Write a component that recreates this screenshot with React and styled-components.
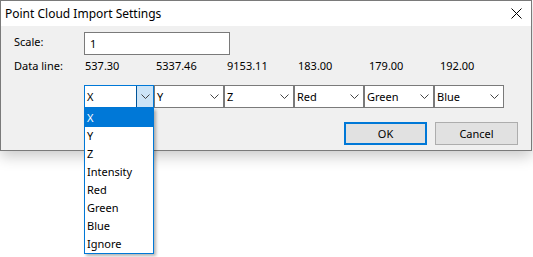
import React from 'react';
import styled, { createGlobalStyle } from 'styled-components';

const GlobalStyle = createGlobalStyle`
	body {
		margin: 0;
		background: #ffffff;
		font-family: 'Noto Sans', 'Open Sans', sans-serif;
		font-size: 11px;
		color: #000;
	}
`;

const Page = styled.div`
	width: 533px;
	height: 257px;
	position: relative;
	overflow: hidden;
`;

const Window = styled.div`
	width: 532px;
	box-sizing: border-box;
	border: 1px solid #7a7a7a;
	box-shadow: 0 5px 14px rgba(0, 0, 0, 0.22);
	display: flex;
	flex-direction: column;
`;

const TitleBar = styled.div`
	height: 25px;
	background: #ffffff;
	display: flex;
	align-items: center;
	justify-content: space-between;
	padding: 0 9px 0 4px;
	font-size: 12px;
`;

const Body = styled.div`
	height: 124px;
	box-sizing: border-box;
	background: #f0f0f0;
	padding: 6px 13px 0 13px;
	display: flex;
	flex-direction: column;
`;

const Row = styled.div`
	display: flex;
	align-items: ${(p) => p.align || 'flex-start'};
	margin-top: ${(p) => p.gap || 0}px;
`;

const Label = styled.div`
	width: 70px;
	flex-shrink: 0;
	padding-top: ${(p) => p.pad || 0}px;
	line-height: 16px;
`;

const TextInput = styled.div`
	width: 146px;
	height: 23px;
	box-sizing: border-box;
	background: #fff;
	border: 1px solid #7a7a7a;
	padding-left: 5px;
	display: flex;
	align-items: center;
`;

const Value = styled.div`
	width: 70px;
	padding-left: 1px;
	line-height: 16px;
`;

const Combo = styled.div`
	width: 70px;
	height: 23px;
	box-sizing: border-box;
	margin-right: ${(p) => (p.last ? 0 : 0)}px;
	background: #fff;
	border: 1px solid ${(p) => (p.active ? '#0078d7' : '#7a7a7a')};
	display: flex;
	align-items: center;
	position: relative;
`;

const ComboText = styled.span`
	flex: 1;
	padding-left: 2px;
`;

const Arrow = styled.div`
	width: 16px;
	align-self: stretch;
	display: flex;
	align-items: center;
	justify-content: center;
	background: ${(p) => (p.active ? '#cce4f7' : 'transparent')};
	border-left: 1px solid ${(p) => (p.active ? '#005499' : 'transparent')};
	margin-right: ${(p) => (p.active ? 0 : 1)}px;
`;

const DropList = styled.div`
	position: absolute;
	left: -1px;
	top: 22px;
	width: 70px;
	box-sizing: border-box;
	background: #fff;
	border: 1px solid #0078d7;
	box-shadow: 2px 2px 3px rgba(0, 0, 0, 0.3);
	z-index: 5;
`;

const Item = styled.div`
	height: 18px;
	line-height: 18px;
	padding-left: 2px;
	background: ${(p) => (p.selected ? '#0078d7' : 'transparent')};
	color: ${(p) => (p.selected ? '#fff' : '#000')};
`;

const Buttons = styled.div`
	display: flex;
	justify-content: flex-end;
	gap: 8px;
	margin-top: 14px;
`;

const Button = styled.div`
	width: 83px;
	height: 23px;
	box-sizing: border-box;
	background: #e1e1e1;
	border: ${(p) => (p.primary ? '2px solid #0078d7' : '1px solid #adadad')};
	display: flex;
	align-items: center;
	justify-content: center;
`;

const Chevron = () => (
	<svg width="9" height="5" viewBox="0 0 9 5">
		<path d="M0.5 0.5 L4.5 4.5 L8.5 0.5" fill="none" stroke="#444" strokeWidth="1" />
	</svg>
);

const CloseIcon = () => (
	<svg width="11" height="11" viewBox="0 0 11 11">
		<path d="M0.5 0.5 L10.5 10.5 M10.5 0.5 L0.5 10.5" stroke="#000" strokeWidth="1" />
	</svg>
);

const values = ['537.30', '5337.46', '9153.11', '183.00', '179.00', '192.00'];
const columns = ['X', 'Y', 'Z', 'Red', 'Green', 'Blue'];
const options = ['X', 'Y', 'Z', 'Intensity', 'Red', 'Green', 'Blue', 'Ignore'];

export default function App() {
	return (
		<Page>
			<GlobalStyle />
			<Window>
				<TitleBar>
					<span>Point Cloud Import Settings</span>
					<CloseIcon />
				</TitleBar>
				<Body>
					<Row>
						<Label pad={2}>Scale:</Label>
						<TextInput>1</TextInput>
					</Row>
					<Row gap={3}>
						<Label>Data line:</Label>
						{values.map((v) => (
							<Value key={v}>{v}</Value>
						))}
					</Row>
					<Row gap={11}>
						<Label />
						{columns.map((c, i) => (
							<Combo key={c} active={i === 0}>
								<ComboText>{c}</ComboText>
								<Arrow active={i === 0}>
									<Chevron />
								</Arrow>
								{i === 0 && (
									<DropList>
										{options.map((o) => (
											<Item key={o} selected={o === 'X'}>
												{o}
											</Item>
										))}
									</DropList>
								)}
							</Combo>
						))}
					</Row>
					<Buttons>
						<Button primary>OK</Button>
						<Button>Cancel</Button>
					</Buttons>
				</Body>
			</Window>
		</Page>
	);
}
